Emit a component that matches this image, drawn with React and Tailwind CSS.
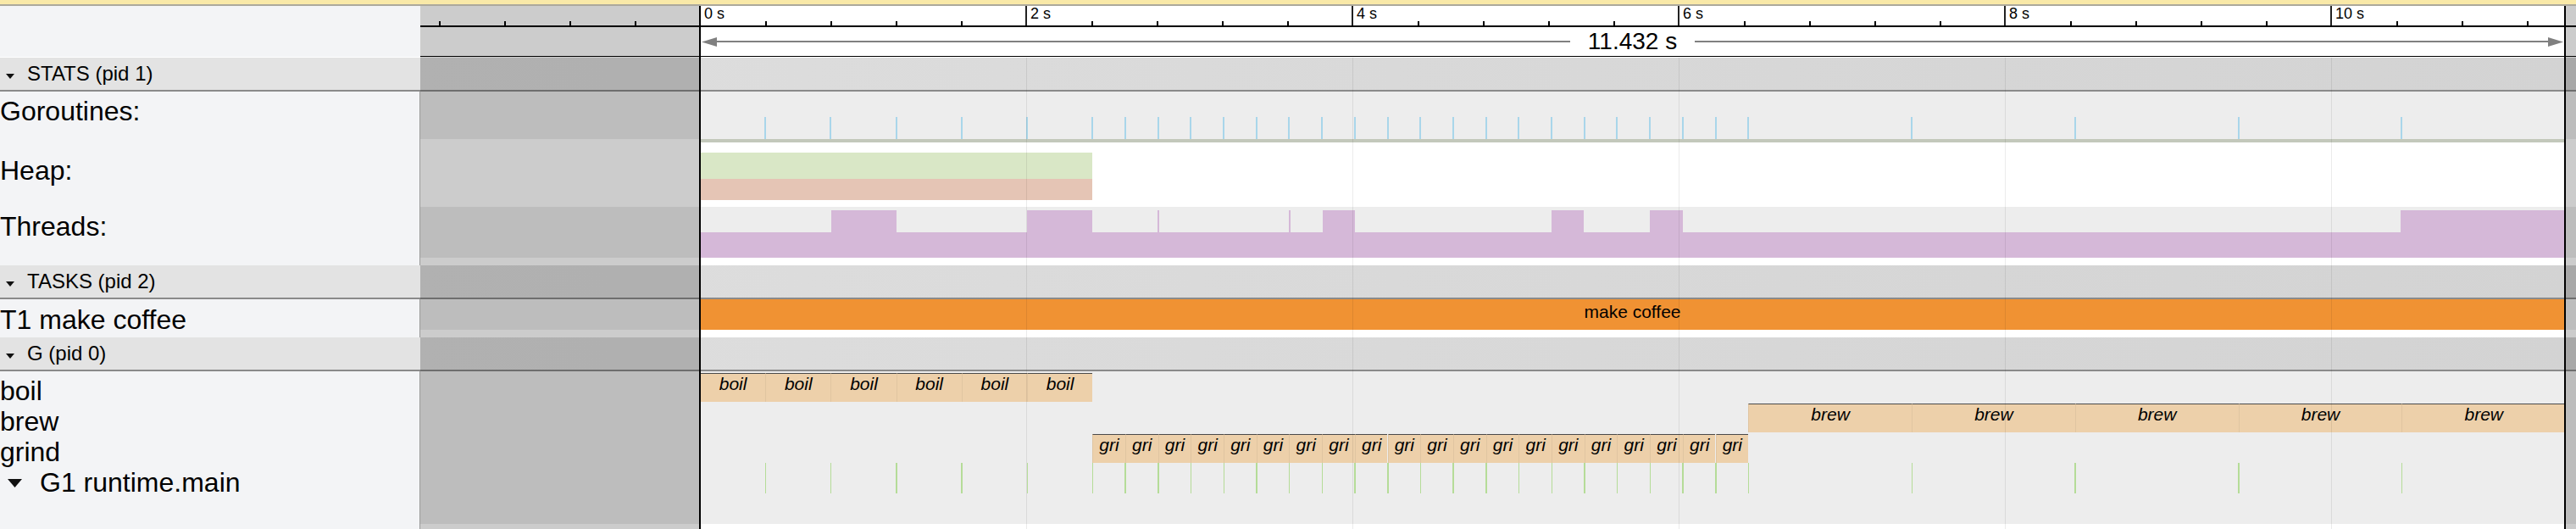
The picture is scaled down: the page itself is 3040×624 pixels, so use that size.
import React from "react";

const PX = 192.5; // pixels per second
const T0 = 330; // 0 s inside a track
const BOIL = 77.2;
const GRIND = 38.7;
const BREW = 192.8;
const GRIND0 = 6 * BOIL;
const BREW0 = GRIND0 + 20 * GRIND;

const boils = Array.from({ length: 6 }, (_, i) => i * BOIL);
const grinds = Array.from({ length: 20 }, (_, i) => GRIND0 + i * GRIND);
const brews = Array.from({ length: 5 }, (_, i) => BREW0 + i * BREW);
const ticks = [...boils.slice(1), GRIND0, ...grinds.slice(1), BREW0, ...brews.slice(1)];

const spikes = [
  [155, 77], [386, 77], [540, 2], [695, 2], [735, 38], [1005, 38], [1121, 39], [2007, 194],
];

const majors = [0, 2, 4, 6, 8, 10];
const minors = Array.from({ length: 33 }, (_, k) => k).filter((k) => k < 4 || (k - 4) % 5 !== 0);

function Header({ title }) {
  return (
    <div className="flex h-[40px] border-b-2 border-[#8a8a8a]">
      <div className="flex w-[496px] shrink-0 items-start bg-[#e3e3e3] pl-[7px]">
        <svg width="10" height="6" viewBox="0 0 10 6" className="mt-[19px] shrink-0">
          <path d="M0 0H10L5 6Z" fill="#111" />
        </svg>
        <span className="ml-[15px] text-[24px] leading-[38px]">{title}</span>
      </div>
      <div className="flex-1 bg-linear-to-r from-[#dedede] to-[#d3d3d3]" />
    </div>
  );
}

function Timeline({ className = "", children }) {
  return <div className={`relative ml-[330px] h-full w-[2201px] ${className}`}>{children}</div>;
}

function Slice({ left, width, top, label }) {
  return (
    <div
      className="absolute flex h-[34px] justify-center overflow-hidden border-t border-l border-t-[#4a4a4a] border-l-black/5 bg-[#edd0aa] pt-[1px] text-[21px] italic leading-[21px]"
      style={{ left, width, top }}
    >
      {label}
    </div>
  );
}

export default function App() {
  return (
    <div className="relative h-[624px] w-[3040px] overflow-hidden bg-white font-['Liberation_Sans',Arial,sans-serif] text-black">
      {/* banner edge */}
      <div className="h-[7px] border-b-2 border-[#aca99c] bg-[#f9e9a8]" />

      {/* ruler */}
      <div className="flex h-[25px]">
        <div className="w-[496px] shrink-0 bg-[#f3f4f6]" />
        <div className="relative flex-1 border-b-2 border-black">
          {minors.map((k) => (
            <div key={k} className="absolute top-[18px] h-[5px] w-[2px] bg-black" style={{ left: 22 + 77 * k }} />
          ))}
          {majors.map((s) => (
            <React.Fragment key={s}>
              {s > 0 && <div className="absolute top-0 h-[23px] w-[2px] bg-[#222]" style={{ left: T0 + s * PX - 1 }} />}
              <span className="absolute top-0 text-[18px] leading-[18px]" style={{ left: T0 + s * PX + 5 }}>
                {s} s
              </span>
            </React.Fragment>
          ))}
        </div>
      </div>

      {/* duration arrow */}
      <div className="flex h-[35px]">
        <div className="w-[496px] shrink-0 bg-[#f3f4f6]" />
        <div className="flex-1 border-b border-black">
          <Timeline className="flex items-center">
            <svg width="18" height="11" viewBox="0 0 18 11" className="ml-[2px] shrink-0">
              <path d="M0 5.5L18 0V11Z" fill="#808080" />
            </svg>
            <div className="h-[2px] flex-1 bg-[#808080]" />
            <span className="px-[21px] text-[28px] leading-[30px]">11.432 s</span>
            <div className="h-[2px] flex-1 bg-[#808080]" />
            <svg width="18" height="11" viewBox="0 0 18 11" className="mr-[2px] shrink-0">
              <path d="M18 5.5L0 0V11Z" fill="#808080" />
            </svg>
          </Timeline>
        </div>
      </div>
      <div className="h-[1px]" />

      <Header title="STATS (pid 1)" />

      {/* Goroutines */}
      <div className="flex h-[60px]">
        <div className="w-[496px] shrink-0 border-r border-[#9a9a9a] bg-[#f3f4f6] pt-[5px] text-[32px] leading-[36px]">
          <span>Goroutines:</span>
        </div>
        <div className="flex flex-1 flex-col">
          <div className="flex-1 bg-[#ededed]">
            <Timeline>
              {ticks.map((x, i) => (
                <div key={i} className="absolute top-[30px] h-[26px] w-[2px] bg-[#a9d6ea]" style={{ left: x - 1 }} />
              ))}
            </Timeline>
          </div>
          <div className="h-[4px] bg-white">
            <Timeline className="bg-[#c3c8bb]" />
          </div>
        </div>
      </div>

      {/* Heap */}
      <div className="flex h-[76px]">
        <div className="w-[496px] shrink-0 border-r border-[#9a9a9a] bg-[#f3f4f6] pt-[15px] text-[32px] leading-[36px]">
          <span>Heap:</span>
        </div>
        <div className="flex-1 bg-white">
          <Timeline>
            <div className="absolute top-[12px] left-0 h-[31px] w-[463px] bg-[#d9e7c6]" />
            <div className="absolute top-[43px] left-0 h-[25px] w-[463px] bg-[#e5c5b5]" />
          </Timeline>
        </div>
      </div>

      {/* Threads */}
      <div className="flex h-[69px]">
        <div className="w-[496px] shrink-0 border-r border-[#9a9a9a] bg-[#f3f4f6] pt-[5px] text-[32px] leading-[36px]">
          <span>Threads:</span>
        </div>
        <div className="flex flex-1 flex-col">
          <div className="h-[60px] bg-[#ededed]">
            <Timeline>
              <div className="absolute top-[30px] left-0 h-[30px] w-full bg-[#d5b8d8]" />
              {spikes.map(([x, w]) => (
                <div key={x} className="absolute top-[4px] h-[56px] bg-[#d5b8d8]" style={{ left: x, width: w }} />
              ))}
            </Timeline>
          </div>
          <div className="flex-1 bg-white" />
        </div>
      </div>

      <Header title="TASKS (pid 2)" />

      {/* T1 */}
      <div className="flex h-[45px]">
        <div className="w-[496px] shrink-0 border-r border-[#9a9a9a] bg-[#f3f4f6] pt-[6px] text-[32px] leading-[36px]">
          <span>T1 make coffee</span>
        </div>
        <div className="flex flex-1 flex-col">
          <div className="h-[36px] bg-[#ededed]">
            <Timeline className="flex justify-center bg-[#f09233] pt-[4px] text-[21px] leading-[21px]">
              make coffee
            </Timeline>
          </div>
          <div className="flex-1 bg-white" />
        </div>
      </div>

      <Header title="G (pid 0)" />

      {/* G rows */}
      <div className="flex h-[186px]">
        <div className="w-[496px] shrink-0 border-r border-[#9a9a9a] bg-[#f3f4f6] pt-[5px] text-[32px] leading-[36px]">
          <div>boil</div>
          <div>brew</div>
          <div>grind</div>
          <div className="flex items-center">
            <svg width="17" height="10" viewBox="0 0 17 10" className="mt-[2px] ml-[9px] shrink-0">
              <path d="M0 0H17L8.5 10Z" fill="#111" />
            </svg>
            <span className="ml-[21px]">G1 runtime.main</span>
          </div>
        </div>
        <div className="flex flex-1 flex-col">
          <div className="h-[180px] bg-[#ededed]">
            <Timeline>
              {boils.map((x) => (
                <Slice key={x} left={x} width={BOIL} top={2} label="boil" />
              ))}
              {brews.map((x) => (
                <Slice key={x} left={x} width={BREW} top={38} label="brew" />
              ))}
              {grinds.map((x) => (
                <Slice key={x} left={x} width={GRIND} top={74} label="gri" />
              ))}
              {ticks.map((x, i) => (
                <div key={i} className="absolute top-[108px] h-[36px] w-[1.5px] bg-[#b5dc98]" style={{ left: x - 0.5 }} />
              ))}
            </Timeline>
          </div>
          <div className="flex-1 bg-white" />
        </div>
      </div>

      {/* grid lines at major ticks */}
      {majors.slice(1).map((s) => (
        <div
          key={s}
          className="absolute top-[68px] bottom-0 w-[1px] bg-black/[0.08]"
          style={{ left: 496 + T0 + s * PX }}
        />
      ))}

      {/* out-of-range shading and trace bounds */}
      <div className="absolute top-[7px] bottom-0 left-[496px] w-[330px] bg-black/20" />
      <div className="absolute top-[7px] bottom-0 left-[3028px] w-[12px] bg-black/20" />
      <div className="absolute top-[7px] bottom-0 left-[825px] w-[2px] bg-black" />
      <div className="absolute top-[7px] bottom-0 left-[3026px] w-[2px] bg-black" />
    </div>
  );
}
